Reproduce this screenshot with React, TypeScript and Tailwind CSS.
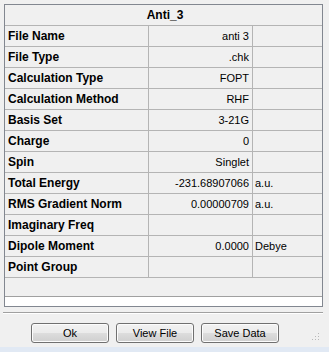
import React from 'react';

type Row = { label: string; value?: string; unit?: string };

const rows: Row[] = [
  { label: 'File Name', value: 'anti 3' },
  { label: 'File Type', value: '.chk' },
  { label: 'Calculation Type', value: 'FOPT' },
  { label: 'Calculation Method', value: 'RHF' },
  { label: 'Basis Set', value: '3-21G' },
  { label: 'Charge', value: '0' },
  { label: 'Spin', value: 'Singlet' },
  { label: 'Total Energy', value: '-231.68907066', unit: 'a.u.' },
  { label: 'RMS Gradient Norm', value: '0.00000709', unit: 'a.u.' },
  { label: 'Imaginary Freq' },
  { label: 'Dipole Moment', value: '0.0000', unit: 'Debye' },
  { label: 'Point Group' },
];

const WinButton: React.FC<{ children: React.ReactNode }> = ({ children }) => (
  <button className="w-[78px] h-[20px] rounded-[3px] border border-[#707070] bg-[linear-gradient(#f2f2f2_0%,#ebebeb_50%,#dddddd_51%,#cfcfcf_100%)] text-[11px] text-black leading-none shadow-[inset_0_0_0_1px_#fcfcfc]">
    {children}
  </button>
);

export default function App() {
  return (
    <div
      className="w-[329px] h-[352px] bg-[#f0f0f0] flex flex-col overflow-hidden"
      style={{ fontFamily: '"Liberation Sans", Arial, sans-serif' }}
    >
      {/* property table */}
      <div className="mt-[4px] ml-[4px] w-[319px] border border-[#828790] flex flex-col">
        <div className="h-[21px] border-b border-[#b4b4b4] flex items-center justify-center text-[12px] font-bold text-black pl-[3px]">
          Anti_3
        </div>
        {rows.map((r) => (
          <div key={r.label} className="grid grid-cols-[144px_104px_1fr] h-[21px] border-b border-[#b4b4b4]">
            <div className="border-r border-[#b4b4b4] flex items-center pl-[3px] text-[12px] font-bold text-black whitespace-nowrap">
              {r.label}
            </div>
            <div className="border-r border-[#b4b4b4] flex items-center justify-end pr-[3px] text-[11px] text-black whitespace-nowrap">
              {r.value}
            </div>
            <div className="flex items-center pl-[2px] text-[11px] text-black whitespace-nowrap">
              {r.unit}
            </div>
          </div>
        ))}
        <div className="h-[19px] border-b border-[#a0a0a0]" />
        <div className="h-[9px] bg-white" />
      </div>

      {/* separator */}
      <div className="mt-[5px] ml-[3px] w-[320px] h-[2px] border-t border-[#a0a0a0] border-b border-b-white" />

      {/* buttons */}
      <div className="relative mt-[9px] h-[20px] flex gap-[7px] pl-[31px]">
        <WinButton>Ok</WinButton>
        <WinButton>View File</WinButton>
        <WinButton>Save Data</WinButton>
        <svg className="absolute left-[312px] top-[10px]" width="8" height="8" viewBox="0 0 8 8">
          <rect x="6" y="0" width="1" height="1" fill="#b8b8b8" />
          <rect x="3" y="3" width="1" height="1" fill="#b8b8b8" />
          <rect x="6" y="3" width="1" height="1" fill="#b8b8b8" />
          <rect x="0" y="6" width="1" height="1" fill="#b8b8b8" />
          <rect x="3" y="6" width="1" height="1" fill="#b8b8b8" />
          <rect x="6" y="6" width="1" height="1" fill="#b8b8b8" />
        </svg>
      </div>

      <div className="mt-auto h-[5px] bg-[#e1e9f4]" />
    </div>
  );
}
